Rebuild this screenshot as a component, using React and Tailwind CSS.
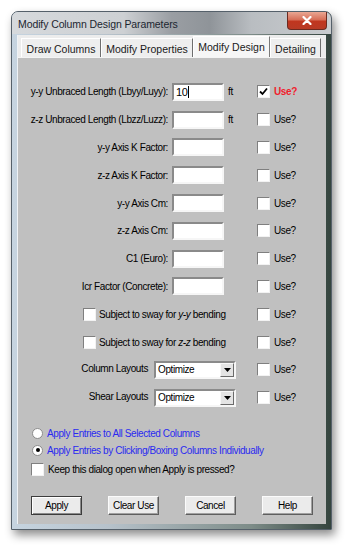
import React from "react";

const Box = ({ checked }) => (
  <span className="flex h-[13px] w-[13px] shrink-0 items-center justify-center border border-t-[#7f7f7f] border-l-[#7f7f7f] border-b-[#f2f2f2] border-r-[#f2f2f2] bg-white">
    {checked && (
      <svg width="9" height="9" viewBox="0 0 9 9">
        <polyline points="1,4.5 3.5,7 8,1.5" fill="none" stroke="#000" strokeWidth="1.8" />
      </svg>
    )}
  </span>
);

const Radio = ({ on }) => (
  <span className="flex h-[11px] w-[11px] shrink-0 items-center justify-center rounded-full border border-[#8c8c8c] bg-white">
    {on && <span className="h-[4px] w-[4px] rounded-full bg-black" />}
  </span>
);

const Use = ({ checked }) => (
  <div className="flex items-center">
    <Box checked={checked} />
    <span className={checked ? "ml-[4px] font-bold text-[#f0202c]" : "ml-[4px]"}>Use?</span>
  </div>
);

const Field = ({ label, unit, value, checked }) => (
  <div className="flex h-[27.8px] items-center">
    <div className="flex w-[239px] items-center">
      <div className="w-[150px] text-right">{label}</div>
      <div className="ml-[4px] flex h-[18px] w-[52px] items-center border-2 border-t-[#8a8a8a] border-l-[#8a8a8a] border-b-[#f6f6f6] border-r-[#f6f6f6] bg-white pl-[2px] text-[11px]">
        {value}
        {value && <span className="ml-[1px] h-[12px] w-[1px] bg-black" />}
      </div>
      <div className="ml-[4px]">{unit}</div>
    </div>
    <Use checked={checked} />
  </div>
);

const Sway = ({ axis }) => (
  <div className="flex h-[27.8px] items-center">
    <div className="flex w-[239px] items-center pl-[65px]">
      <Box />
      <span className="ml-[3px]">
        Subject to sway for <i>{axis}</i> bending
      </span>
    </div>
    <Use />
  </div>
);

const SelectRow = ({ label }) => (
  <div className="flex h-[27.8px] items-center">
    <div className="flex w-[239px] items-center">
      <div className="-mt-[2px] w-[130px] text-right">{label}</div>
      <div className="ml-[6px] flex h-[18px] w-[82px] items-center justify-between border-2 border-t-[#8a8a8a] border-l-[#8a8a8a] border-b-[#f6f6f6] border-r-[#f6f6f6] bg-white pl-[2px]">
        <span>Optimize</span>
        <span className="flex h-[14px] w-[14px] items-center justify-center border border-t-[#f8f8f8] border-l-[#f8f8f8] border-b-[#6b6b6b] border-r-[#6b6b6b] bg-[#e4e4e4]">
          <svg width="7" height="4" viewBox="0 0 7 4">
            <polygon points="0,0 7,0 3.5,4" fill="#000" />
          </svg>
        </span>
      </div>
    </div>
    <Use />
  </div>
);

const Btn = ({ children, main }) => (
  <button
    className={
      main
        ? "h-[19px] w-[51px] border border-[#3c3c3c] bg-[#ebebeb] shadow-[inset_1px_1px_0_#fff,inset_-1px_-1px_0_#8a8a8a]"
        : "h-[19px] w-[51px] border border-t-[#fbfbfb] border-l-[#fbfbfb] border-b-[#5e5e5e] border-r-[#5e5e5e] bg-[#ebebeb] shadow-[inset_-1px_-1px_0_#a0a0a0]"
    }
  >
    {children}
  </button>
);

const tabs = [
  { name: "Draw Columns", w: "w-[80px]" },
  { name: "Modify Properties", w: "w-[92px]" },
  { name: "Modify Design", w: "w-[77px]", active: true },
  { name: "Detailing", w: "w-[51px]" },
];

export default function App() {
  return (
    <div className="h-[548px] w-[350px] overflow-hidden bg-white pl-[11px] pt-[11px] font-['Liberation_Sans',Arial,sans-serif] text-black">
      <div className="flex h-[519px] w-[321px] flex-col rounded-t-[7px] border border-[#55606a] bg-[linear-gradient(90deg,#c6d4e0_0%,#b7c2cb_30%,#7d8c88_75%,#34443e_100%)] shadow-[3px_5px_10px_rgba(0,0,0,0.45)]">
        {/* Title bar */}
        <div className="flex h-[22px] items-start justify-between rounded-t-[6px] bg-[linear-gradient(90deg,#d6d9dc_0%,#cdd0d3_35%,#9a9ea3_50%,#8f9499_62%,#b9bdc1_75%,#c9cccf_100%)]">
          <span className="pl-[6px] pt-[5px] text-[10.5px] tracking-[-0.1px] text-[#1c2630]">
            Modify Column Design Parameters
          </span>
          <div className="mr-[4px] flex h-[18px] w-[40px] items-center justify-center rounded-b-[4px] border border-t-0 border-[#6b2a20] bg-[linear-gradient(180deg,#e9a793_0%,#d76f58_45%,#c0361f_55%,#b83a24_100%)]">
            <svg width="10" height="9" viewBox="0 0 10 9">
              <path d="M1.5 1 L8.5 8 M8.5 1 L1.5 8" stroke="#fff" strokeWidth="2.2" strokeLinecap="round" />
            </svg>
          </div>
        </div>

        {/* Client */}
        <div className="ml-[5px] mt-[1px] flex h-[489px] w-[309px] flex-col border-l border-[#eef2f6] bg-[#ececec] text-[10px] tracking-[-0.4px]">
          <div className="flex h-[22px] items-end pl-[3px]">
            {tabs.map((t) => (
              <div
                key={t.name}
                className={
                  t.active
                    ? `${t.w} flex h-[21px] items-start justify-center border-x border-t border-l-white border-t-white border-r-[#7a7a7a] bg-[#f6f6f6] pt-[3px] text-[10.5px] tracking-normal text-[#1a1a1a]`
                    : `${t.w} flex h-[19px] items-start justify-center border-r border-l border-t border-l-white border-t-white border-r-[#6e6e6e] bg-[#eeeeee] pt-[3px] text-[10.5px] tracking-normal text-[#1a1a1a]`
                }
              >
                {t.name}
              </div>
            ))}
          </div>

          <div className="flex flex-1 flex-col border-t border-[#f4f4f4] bg-[#c0c0c0] pt-[20px]">
            <Field label="y-y Unbraced Length (Lbyy/Luyy):" unit="ft" value="10" checked />
            <Field label="z-z Unbraced Length (Lbzz/Luzz):" unit="ft" />
            <Field label="y-y Axis K Factor:" />
            <Field label="z-z Axis K Factor:" />
            <Field label="y-y Axis Cm:" />
            <Field label="z-z Axis Cm:" />
            <Field label="C1 (Euro):" />
            <Field label="Icr Factor (Concrete):" />
            <Sway axis="y-y" />
            <Sway axis="z-z" />
            <SelectRow label="Column Layouts" />
            <SelectRow label="Shear Layouts" />

            <div className="mt-[13px] flex h-[17px] items-center pl-[14px] text-[#2a2af0]">
              <Radio />
              <span className="ml-[4px]">Apply Entries to All Selected Columns</span>
            </div>
            <div className="flex h-[17px] items-center pl-[14px] text-[#2a2af0]">
              <Radio on />
              <span className="ml-[4px]">Apply Entries by Clicking/Boxing Columns Individually</span>
            </div>
            <div className="mt-[1px] flex h-[20px] items-center pl-[13px]">
              <Box />
              <span className="ml-[4px]">Keep this dialog open when Apply is pressed?</span>
            </div>

            <div className="mt-[16px] flex gap-[26px] pl-[13px]">
              <Btn main>Apply</Btn>
              <Btn>Clear Use</Btn>
              <Btn>Cancel</Btn>
              <Btn>Help</Btn>
            </div>
          </div>
        </div>
      </div>
    </div>
  );
}
